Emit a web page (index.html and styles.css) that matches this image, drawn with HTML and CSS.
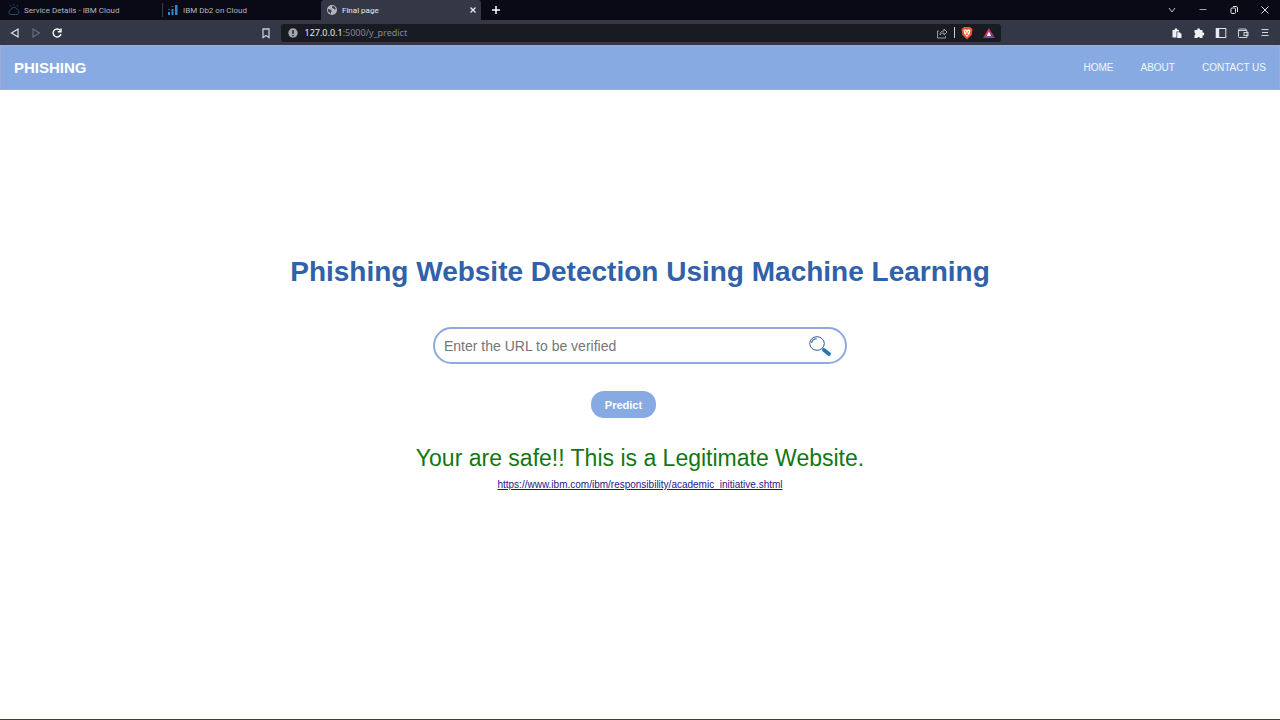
FILE: index.html
```html
<!DOCTYPE html>
<html lang="en">
<head>
<meta charset="utf-8">
<title>Final page</title>
<link rel="stylesheet" href="styles.css">
</head>
<body>
<header class="browser">
  <div class="tabs">
    <div class="tab">
      <svg class="tab-icon" viewBox="0 0 12 12" fill="none" stroke="#24506c" stroke-width="1"><path d="M3 10.500a2.300 2.300 0 0 1-.4-4.500A3.500 3.500 0 0 1 9.200 5.500 2.600 2.600 0 0 1 9 10.500z"/><path d="M3 2.500 2 1M6 1.600V0M9 2.500 10 1"/></svg>
      <span class="tab-title">Service Details - IBM Cloud</span>
    </div>
    <div class="tab divided">
      <svg class="tab-icon" viewBox="0 0 12 12"><path fill="#3286c3" d="M1 8h2v3H1zM4.500 5h2v6h-2zM8 1h2.500v10H8z"/><path fill="#225b91" d="M1 5h2v1H1zM4.500 2h2v1h-2z"/></svg>
      <span class="tab-title">IBM Db2 on Cloud</span>
    </div>
    <div class="tab active">
      <svg class="tab-icon" viewBox="0 0 12 12"><circle cx="6" cy="6" r="5" fill="#b3b5bd"/><path fill="#3b3e4f" d="M2 5l2.500.5 1.500 1.500-1 1v2L3.500 8.500 2 7.500zM6 2.500l2-.5L10 5 8.500 5.500 7.500 4.500 6 4z"/></svg>
      <span class="tab-title">Final page</span>
      <button class="icon-button" aria-label="Close tab"><svg viewBox="0 0 12 12" fill="none" stroke="#e8e8ee" stroke-width="1.300"><path d="M3.500 3.500l5 5M8.500 3.500l-5 5"/></svg></button>
    </div>
    <button class="icon-button new-tab" aria-label="New tab"><svg viewBox="0 0 12 12" fill="none" stroke="#fff" stroke-width="1.500"><path d="M6 2v8M2 6h8"/></svg></button>
    <div class="window-buttons">
      <button class="icon-button" aria-label="Search tabs"><svg viewBox="0 0 12 12" fill="none" stroke="#c3c3ca"><path d="M3 4l3 4 3-4"/></svg></button>
      <button class="icon-button" aria-label="Minimize"><svg viewBox="0 0 12 12" fill="none" stroke="#a3a3aa"><path d="M2.500 5.500h7"/></svg></button>
      <button class="icon-button" aria-label="Restore"><svg viewBox="0 0 12 12" fill="none" stroke="#e0e0e5"><rect x="3" y="4" width="4.500" height="5.500" rx="1"/><path d="M5 2.500h3q1.500 0 1.500 1.500V8"/></svg></button>
      <button class="icon-button" aria-label="Close window"><svg viewBox="0 0 12 12" fill="none" stroke="#e0e0e5"><path d="M2.500 2.500l7 7M9.500 2.500l-7 7"/></svg></button>
    </div>
  </div>
  <div class="toolbar">
    <div class="nav-buttons">
      <button class="icon-button" aria-label="Back"><svg viewBox="0 0 12 12" fill="none" stroke="#e4e4ea" stroke-width="1.200"><path d="M9 2v8L2.500 6z"/></svg></button>
      <button class="icon-button" aria-label="Forward"><svg viewBox="0 0 12 12" fill="none" stroke="#6c6f7d" stroke-width="1.100"><path d="M3 2v8l6.500-4z"/></svg></button>
      <button class="icon-button" aria-label="Reload"><svg viewBox="0 0 12 12" fill="none" stroke="#fff" stroke-width="1.400"><path d="M9.300 3.500A4 4 0 1 0 10 7"/><path d="M10 1.500V4.700H6.800"/></svg></button>
    </div>
    <button class="icon-button bookmark" aria-label="Bookmark"><svg viewBox="0 0 12 12" fill="none" stroke="#c8cad2" stroke-width="1.300"><path d="M3 2h6v8.500L6 8.500 3 10.500z"/></svg></button>
    <div class="address">
      <svg class="tab-icon" viewBox="0 0 12 12"><circle cx="6" cy="6" r="4.700" fill="#a5a7ae"/><path d="M6 3v4M6 8v1.200" stroke="#191b22" stroke-width="1.400"/></svg>
      <span class="url"><b>127.0.0.1</b>:5000/y_predict</span>
      <button class="icon-button share" aria-label="Share"><svg viewBox="0 0 12 12" fill="none" stroke="#a6a7af" stroke-width=".9"><path d="M3 4H1.500v7h8V9M4 8c0-3 1.500-4 4-4V2l3 3-3 3V6C6 6 5 6.500 4 8z"/></svg></button>
      <span class="rule"></span>
      <button class="icon-button shields" aria-label="Shields"><svg viewBox="0 0 12 14"><path fill="#e7542d" d="M3 1h6l2.500 2-.8 6L6 13.500 1.300 9 .500 3z"/><path fill="#fff0e6" d="M2.500 4l2-.7L6 4l1.500-.7 2 .7-.8 4L6 11 3.300 8z"/><path d="M4 5.500l1.400.7M8 5.500l-1.400.7M6 6.500v2M4.700 8.500h2.600" stroke="#e7542d" stroke-width=".8"/></svg></button>
      <button class="icon-button" aria-label="Rewards"><svg viewBox="0 0 12 12"><path fill="#df3d47" d="M6 1L0 11l6-4z"/><path fill="#ad316d" d="M6 1l6 10-6-4z"/><path fill="#6756aa" d="M0 11h12L6 7.500z"/><path fill="#fff" d="M6 4.500l2.200 4.500H3.800z"/></svg></button>
    </div>
    <div class="tools">
      <button class="icon-button" aria-label="Clipboard"><svg viewBox="0 0 12 12"><path fill="#f0f1f5" d="M1.500 3h2L4 1.500h2L6.500 3H8v1.500H5.500V10.500h-4zM6.200 5.200h2.500L10.500 7v4H6.200z"/></svg></button>
      <button class="icon-button" aria-label="Extensions"><svg viewBox="0 0 12 12"><path fill="#f0f1f5" d="M1.500 3h2.700a1.400 1.400 0 1 1 2.700 0h2.600v2.700a1.400 1.400 0 1 1 0 2.700V11H7a1.400 1.400 0 0 0-2.700 0H1.500V8.300a1.400 1.400 0 0 0 0-2.600z"/></svg></button>
      <button class="icon-button" aria-label="Sidebar"><svg viewBox="0 0 12 12"><rect x="1.200" y="1.500" width="9.600" height="9" fill="none" stroke="#e0e1e7"/><path fill="#e8e9ee" d="M1 1.500h3.200v9H1z"/></svg></button>
      <button class="icon-button" aria-label="Wallet"><svg viewBox="0 0 12 12" fill="none" stroke="#d0d1d7"><path d="M9 3.500V2H2.500a1 1 0 0 0-1 1v6.500a1 1 0 0 0 1 1H10v-7H2"/><rect x="7" y="5.500" width="4" height="3"/></svg></button>
      <button class="icon-button" aria-label="Menu"><svg viewBox="0 0 12 12" stroke="#d4d5db"><path d="M2.500 2.500h7M3 5.500h6M2.500 8.500h7"/></svg></button>
    </div>
  </div>
</header>
<nav class="site-nav">
  <strong class="brand">PHISHING</strong>
  <a href="#">HOME</a>
  <a href="#">ABOUT</a>
  <a href="#">CONTACT US</a>
</nav>
<main class="content">
  <h1 class="title">Phishing Website Detection Using Machine Learning</h1>
  <form class="form">
    <div class="search">
      <input class="search-input" type="text" aria-label="URL" placeholder="Enter the URL to be verified">
      <svg class="search-icon" viewBox="0 0 24 22"><ellipse cx="9" cy="8.500" rx="7.300" ry="6.800" fill="#fff" stroke="#315f9a"/><path d="M3.600 8C4 5.500 6 3.800 8.700 3.700" fill="none" stroke="#315f9a" stroke-width="1.100"/><path d="M14.500 13.500l2 1.500" stroke="#3a7199" stroke-width="1.300"/><path d="M16 15l5 4" stroke="#277ab0" stroke-width="3.800" stroke-linecap="round"/></svg>
    </div>
    <button class="predict" type="button">Predict</button>
  </form>
  <p class="result">Your are safe!! This is a Legitimate Website.</p>
  <a class="checked-url" href="https://www.ibm.com/ibm/responsibility/academic_initiative.shtml">https://www.ibm.com/ibm/responsibility/academic_initiative.shtml</a>
</main>
</body>
</html>
```
FILE: styles.css
```css
* { box-sizing: border-box; }
body {
  margin: 0;
  min-height: 100vh;
  display: flex;
  flex-direction: column;
  background: #fff;
  border-bottom: 1px solid #70282b;
  font-family: "Liberation Sans", Arial, sans-serif;
}
button { padding: 0; border: 0; background: none; font: inherit; }
svg { display: block; }
.browser { font-family: "Noto Sans", sans-serif; }
.tabs { display: flex; height: 20px; background: #090a15; }
.tab {
  display: flex;
  align-items: center;
  gap: 4px;
  width: 160px;
  padding: 0 2px 0 8px;
  color: #b7b7be;
  font-family: Roboto, sans-serif;
  font-size: 8px;
}
.tab.divided { width: 161px; padding-left: 8px; }
.tab.divided::before { content: ""; width: 1px; height: 14px; margin-left: -6px; background: #3b3c46; }
.tab.active { background: #343746; color: #e9e9ef; border-radius: 3px 3px 0 0; padding-left: 5px; }
.tab-title { flex: 1; white-space: nowrap; }
.tab-icon { width: 12px; height: 12px; flex: none; }
.icon-button { width: 12px; height: 12px; flex: none; }
.icon-button svg { width: 100%; height: 100%; }
.new-tab { align-self: center; margin-left: 9px; }
.window-buttons { display: flex; align-items: center; gap: 19px; margin-left: auto; padding-right: 9px; }
.toolbar { display: flex; align-items: center; height: 25px; background: #343746; }
.nav-buttons { display: flex; flex: 1; gap: 9px; padding-left: 9px; }
.bookmark { margin-right: 9px; }
.address {
  display: flex;
  align-items: center;
  gap: 6px;
  width: 720px;
  height: 18px;
  padding: 0 6px;
  border-radius: 3px;
  background: #191b22;
  color: #858891;
  font-size: 9px;
}
.url { flex: 1; }
.url b { color: #e7e7ec; font-weight: 400; }
.rule { width: 1px; height: 11px; background: #d0d0d5; }
.shields { height: 14px; margin-right: 4px; }
.tools { display: flex; flex: 1; justify-content: flex-end; gap: 10px; margin-left: 20px; padding-right: 9px; }
.site-nav {
  display: flex;
  align-items: center;
  gap: 27px;
  height: 45px;
  padding: 0 13px;
  background: #88aae2;
  border: 1px solid #a0abd0;
}
.brand { margin-right: auto; color: #fff; font-size: 15px; }
.site-nav a { color: #f1f8ff; font-size: 11px; text-decoration: none; }
.site-nav a { font-size: 10px; }
.content { display: flex; flex-direction: column; align-items: center; padding: 164px 16px 24px; }
.title { margin: 0; color: #3061a9; font-size: 28px; line-height: 36px; text-align: center; }
.form { display: flex; flex-direction: column; align-items: center; width: 100%; max-width: 414px; margin-top: 37px; }
.search {
  display: flex;
  align-items: center;
  width: 100%;
  height: 37px;
  padding: 0 13px 0 9px;
  border: 2px solid #8fa9dc;
  border-radius: 19px;
}
.search-input { flex: 1; min-width: 0; padding: 0; border: 0; outline: 0; font: inherit; font-size: 14px; }
.search-input::placeholder { color: #757575; }
.search-icon { width: 24px; height: 22px; }
.predict {
  width: 65px;
  height: 27px;
  margin: 27px 33px 0 0;
  border-radius: 13px;
  background: #88aae2;
  color: #fff;
  font-size: 11px;
  font-weight: 700;
}
.result { margin: 26px 0 0; color: #137713; font-size: 23px; line-height: 28px; text-align: center; }
.checked-url { margin-top: 6px; color: #1e1789; font-size: 10px; line-height: 14px; overflow-wrap: anywhere; }
```
